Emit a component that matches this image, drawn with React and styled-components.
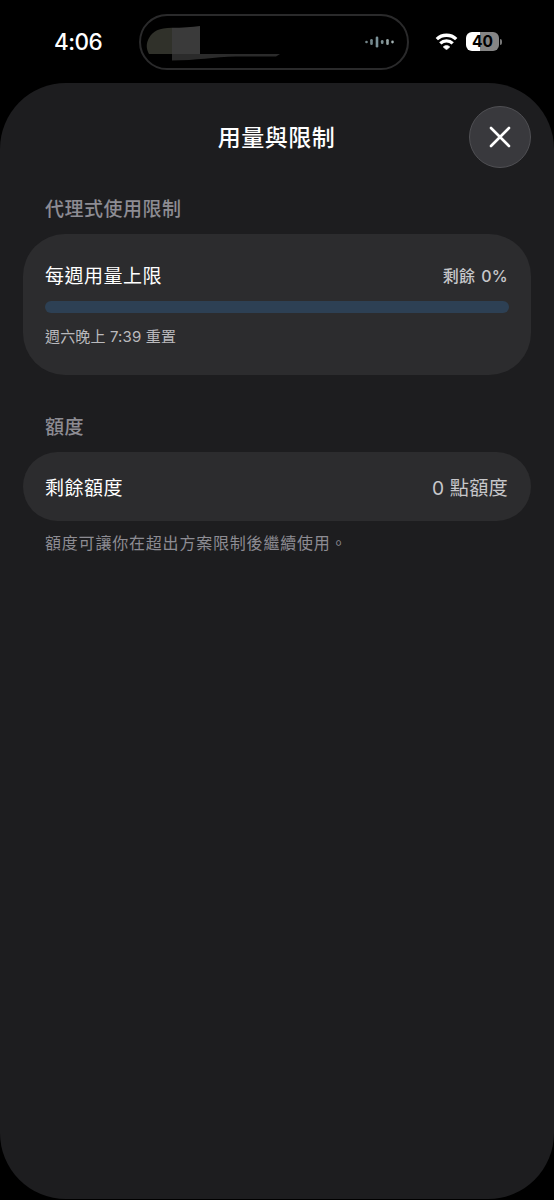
import React from "react";
import styled, { createGlobalStyle } from "styled-components";

const GlobalStyle = createGlobalStyle`
  html, body { margin: 0; background: #000; }
  body {
    font-family: Inter, "Noto Sans CJK TC", sans-serif;
    color: #fff;
  }
`;

const Screen = styled.div`
  display: flex;
  flex-direction: column;
  width: 554px;
  height: 1200px;
  background: #000;
  overflow: hidden;
`;

const StatusBar = styled.header`
  display: flex;
  align-items: center;
  flex: none;
  box-sizing: border-box;
  height: 83px;
  padding: 0 52px 0 54px;
`;

const Clock = styled.time`
  width: 85px;
  font-size: 22.5px;
  line-height: 28px;
  font-weight: 550;
  letter-spacing: -0.5px;
`;

const Island = styled.div`
  display: flex;
  align-items: center;
  justify-content: space-between;
  box-sizing: border-box;
  width: 270px;
  height: 56px;
  padding: 0 13px 0 5px;
  border: 2px solid #2a2a2b;
  border-radius: 28px;
`;

const Glyph = styled.svg`
  display: block;
  flex: none;
`;

const StatusIcons = styled.div`
  display: flex;
  align-items: center;
  gap: 8px;
  margin-left: auto;
`;

const BatteryWrap = styled.div`
  display: flex;
  align-items: center;
  gap: 1px;
`;

const BatteryBody = styled.div`
  width: 33px;
  height: 19px;
  border-radius: 6px;
  background: linear-gradient(90deg, #fff 0 14px, #858585 14px);
  color: #000;
  font-size: 15.5px;
  line-height: 19px;
  font-weight: 650;
  text-align: center;
`;

const BatteryTip = styled.i`
  width: 2px;
  height: 6px;
  border-radius: 0 2px 2px 0;
  background: #777;
`;

const Sheet = styled.main`
  flex: none;
  box-sizing: border-box;
  height: 1116px;
  padding: 23px 23px 0;
  border-radius: 66px;
  background: #1d1d1f;
`;

const SheetHeader = styled.div`
  display: grid;
  grid-template-columns: 62px 1fr 62px;
  align-items: center;
  height: 62px;
`;

const Title = styled.h1`
  grid-column: 2;
  margin: 2px 1px 0 0;
  font-size: 23px;
  line-height: 32px;
  font-weight: 500;
  letter-spacing: 0.5px;
  text-align: center;
`;

const CloseButton = styled.button`
  display: grid;
  place-items: center;
  width: 62px;
  height: 62px;
  padding: 0;
  border: 1px solid #505054;
  border-radius: 50%;
  background: #39393d;
`;

const SectionTitle = styled.h2`
  margin: ${({ $top }) => $top}px 22px 10px;
  font-size: 19px;
  line-height: 28px;
  font-weight: 500;
  letter-spacing: 0.5px;
  color: #8d8c93;
`;

const Card = styled.section`
  box-sizing: border-box;
  height: ${({ $height }) => $height}px;
  padding: ${({ $padTop }) => $padTop}px 22px 0;
  border-radius: ${({ $radius }) => $radius}px;
  background: #2c2c2e;
`;

const Row = styled.div`
  display: flex;
  align-items: flex-start;
  justify-content: space-between;
  height: 28px;
`;

const Label = styled.span`
  font-size: 19px;
  line-height: 28px;
  letter-spacing: 0.5px;
`;

const Value = styled.span`
  margin-right: 1px;
  font-size: ${({ $size }) => $size}px;
  line-height: 26px;
  font-weight: ${({ $weight }) => $weight};
  letter-spacing: ${({ $spacing }) => $spacing}px;
  word-spacing: ${({ $gap }) => $gap}px;
  color: #c7c7ca;
`;

const Track = styled.div`
  height: 12px;
  margin-top: 10px;
  border-radius: 6px;
  background: #2d4054;
`;

const ResetTime = styled.p`
  margin: 13px 0 0;
  font-size: 15px;
  line-height: 22px;
  letter-spacing: 0.15px;
  color: #bababd;
`;

const Footnote = styled.p`
  margin: 9px 22px 0;
  font-size: 16px;
  line-height: 26px;
  letter-spacing: 0.8px;
  color: #8d8c93;
`;

const VOICE_BARS = [
  [1.5, 2.6, "#74868b"],
  [6.5, 6, "#72868b"],
  [12, 11, "#7b9299"],
  [17.2, 4.2, "#7d9094"],
  [22.5, 6, "#94a3a3"],
  [27.5, 2.8, "#a5b3b4"],
];

function ActivityPreview() {
  return (
    <Glyph width="136" height="38" viewBox="0 0 136 38">
      <path d="M3 31C0 26 0 20 3 15C7 8 13 5 26 4.8V31Z" fill="#30312a" />
      <path d="M26 4.8C36 4.8 46 4.2 54 3V31H26Z" fill="#3a3a3a" />
      <path d="M26 31H134L130 33.5H90C68 34 50 37.5 26 37.5Z" fill="#2b2b2b" />
    </Glyph>
  );
}

function VoiceLevel() {
  return (
    <Glyph width="29" height="14" viewBox="0 0 29 14">
      {VOICE_BARS.map(([x, h, fill]) => (
        <rect key={x} x={x - 1.3} y={7 - h / 2} width="2.6" height={h} rx="1.3" fill={fill} />
      ))}
    </Glyph>
  );
}

function Wifi() {
  return (
    <Glyph width="23" height="17" viewBox="0 0 23 17" fill="none" stroke="#fff" strokeWidth="3.3">
      <path d="M1.8 6.2C7.1.9 15.9.9 21.2 6.2" />
      <path d="M5.3 10.4C8.8 7 14.2 7 17.7 10.4" />
      <path d="M11.5 16.8L8.2 14C9.8 12 13.2 12 14.8 14Z" fill="#fff" stroke="#fff" strokeWidth="0.6" strokeLinejoin="round" />
    </Glyph>
  );
}

export default function App() {
  return (
    <Screen>
      <GlobalStyle />
      <StatusBar>
        <Clock>4:06</Clock>
        <Island>
          <ActivityPreview />
          <VoiceLevel />
        </Island>
        <StatusIcons>
          <Wifi />
          <BatteryWrap>
            <BatteryBody>40</BatteryBody>
            <BatteryTip />
          </BatteryWrap>
        </StatusIcons>
      </StatusBar>
      <Sheet>
        <SheetHeader>
          <Title>用量與限制</Title>
          <CloseButton aria-label="關閉">
            <Glyph width="22" height="22" viewBox="0 0 22 22" stroke="#fff" strokeWidth="2.6" strokeLinecap="round">
              <path d="M2 2L20 20M20 2L2 20" />
            </Glyph>
          </CloseButton>
        </SheetHeader>
        <SectionTitle $top={28}>代理式使用限制</SectionTitle>
        <Card $height={141} $padTop={29} $radius={42}>
          <Row>
            <Label>每週用量上限</Label>
            <Value $size={16} $weight={500} $spacing={0.25} $gap={1.5}>剩餘 0%</Value>
          </Row>
          <Track />
          <ResetTime>週六晚上 7:39 重置</ResetTime>
        </Card>
        <SectionTitle $top={39}>額度</SectionTitle>
        <Card $height={69} $padTop={23} $radius={35}>
          <Row>
            <Label>剩餘額度</Label>
            <Value $size={19.2} $weight={400} $spacing={0.2} $gap={0}>0 點額度</Value>
          </Row>
        </Card>
        <Footnote>額度可讓你在超出方案限制後繼續使用。</Footnote>
      </Sheet>
    </Screen>
  );
}
